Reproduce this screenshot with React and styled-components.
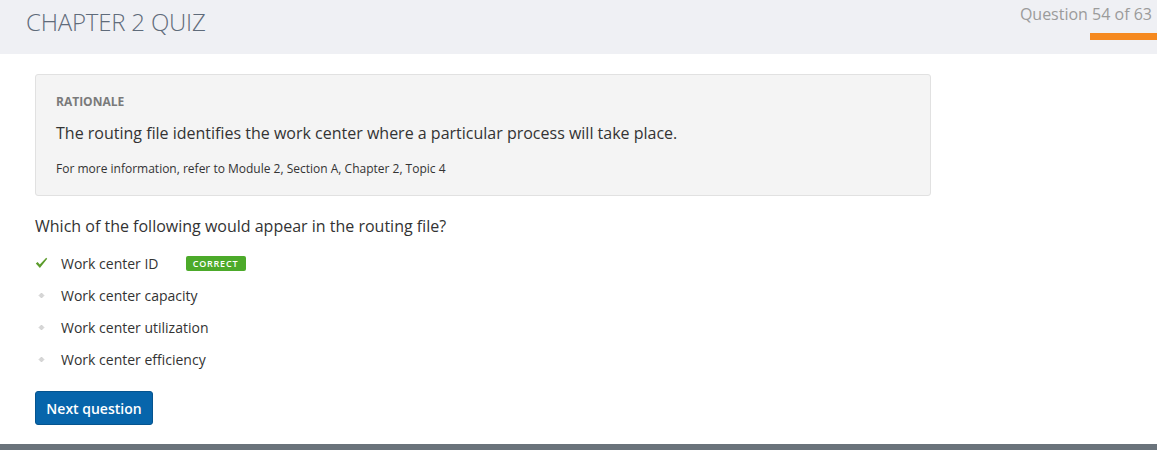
import React from 'react';
import styled, { createGlobalStyle } from 'styled-components';

const GlobalStyle = createGlobalStyle`
  html, body {
    margin: 0;
    padding: 0;
    background: #fff;
    font-family: "Open Sans", "Liberation Sans", sans-serif;
  }
`;

const options = [
  { label: 'Work center ID', correct: true },
  { label: 'Work center capacity' },
  { label: 'Work center utilization' },
  { label: 'Work center efficiency' },
];

const App = () => (
  <Page>
    <GlobalStyle />
    <Header>
      <Title>CHAPTER 2 QUIZ</Title>
      <Progress>
        <Counter>Question 54 of 63</Counter>
        <ProgressBar />
      </Progress>
    </Header>
    <Main>
      <Rationale>
        <RationaleLabel>RATIONALE</RationaleLabel>
        <RationaleText>The routing file identifies the work center where a particular process will take place.</RationaleText>
        <Reference>For more information, refer to Module 2, Section A, Chapter 2, Topic 4</Reference>
      </Rationale>
      <Question>Which of the following would appear in the routing file?</Question>
      <OptionList>
        {options.map((o) => (
          <Option key={o.label}>
            <Marker>
              {o.correct ? (
                <svg width="13" height="12" viewBox="0 0 13 12">
                  <path d="M0.8 6.6 L2.6 5 L4.8 7.4 L11.2 0.8 L12.2 1.8 L4.9 11 Z" fill="#5c9c2c" />
                </svg>
              ) : (
                <svg width="13" height="7" viewBox="0 0 13 7">
                  <path d="M6.5 1 L9 3.5 L6.5 6 L4 3.5 Z" fill="#d6d6d6" stroke="#c4c4c4" strokeWidth="0.6" />
                </svg>
              )}
            </Marker>
            <OptionText>{o.label}</OptionText>
            {o.correct && <Badge>CORRECT</Badge>}
          </Option>
        ))}
      </OptionList>
      <NextButton>Next question</NextButton>
    </Main>
    <Footer />
  </Page>
);

const Page = styled.div`
  width: 1157px;
  height: 450px;
  display: flex;
  flex-direction: column;
  overflow: hidden;
`;

const Header = styled.header`
  height: 54px;
  background: #eff0f4;
  display: flex;
  justify-content: space-between;
  align-items: flex-start;
  padding-left: 26px;
  flex-shrink: 0;
`;

const Title = styled.h1`
  margin: 5px 0 0;
  font-size: 24px;
  font-weight: 300;
  color: #5f6b7a;
  letter-spacing: -0.2px;
`;

const Progress = styled.div`
  display: flex;
  flex-direction: column;
  align-items: flex-end;
`;

const Counter = styled.div`
  margin-top: 3px;
  padding-right: 5px;
  font-size: 16px;
  color: #9b9b9b;
  line-height: 22px;
`;

const ProgressBar = styled.div`
  margin-top: 8px;
  width: 67px;
  height: 7px;
  background: #f5891f;
`;

const Main = styled.main`
  flex: 1;
  padding: 20px 35px 0;
`;

const Rationale = styled.section`
  width: 896px;
  height: 122px;
  box-sizing: border-box;
  background: #f4f4f4;
  border: 1px solid #e1e1e1;
  border-radius: 3px;
  padding: 18px 20px 0;
`;

const RationaleLabel = styled.div`
  font-size: 12px;
  font-weight: 700;
  color: #7a7a7a;
  line-height: 17px;
`;

const RationaleText = styled.p`
  margin: 12px 0 0;
  font-size: 16px;
  color: #333;
  line-height: 22px;
`;

const Reference = styled.p`
  margin: 16px 0 0;
  font-size: 12px;
  color: #333;
  line-height: 17px;
`;

const Question = styled.p`
  margin: 18px 0 0;
  font-size: 16px;
  color: #333;
  line-height: 24px;
`;

const OptionList = styled.div`
  margin-top: 9px;
  display: flex;
  flex-direction: column;
`;

const Option = styled.div`
  height: 32px;
  display: flex;
  align-items: center;
`;

const Marker = styled.span`
  width: 26px;
  display: flex;
  align-items: center;
`;

const OptionText = styled.span`
  font-size: 14px;
  color: #333;
`;

const Badge = styled.span`
  margin-left: 27px;
  width: 60px;
  text-align: center;
  background: #4caa2a;
  color: #fff;
  font-size: 9px;
  font-weight: 600;
  letter-spacing: 0.8px;
  height: 15px;
  line-height: 15px;
  border-radius: 2px;
`;

const NextButton = styled.button`
  margin-top: 16px;
  width: 118px;
  height: 34px;
  background: #0765ab;
  border: 1px solid #05548f;
  border-radius: 3px;
  color: #fff;
  font-family: "Open Sans", "Liberation Sans", sans-serif;
  font-size: 14px;
  font-weight: 600;
  cursor: pointer;
`;

const Footer = styled.footer`
  height: 6px;
  background: #6a737b;
  flex-shrink: 0;
`;

export default App;
